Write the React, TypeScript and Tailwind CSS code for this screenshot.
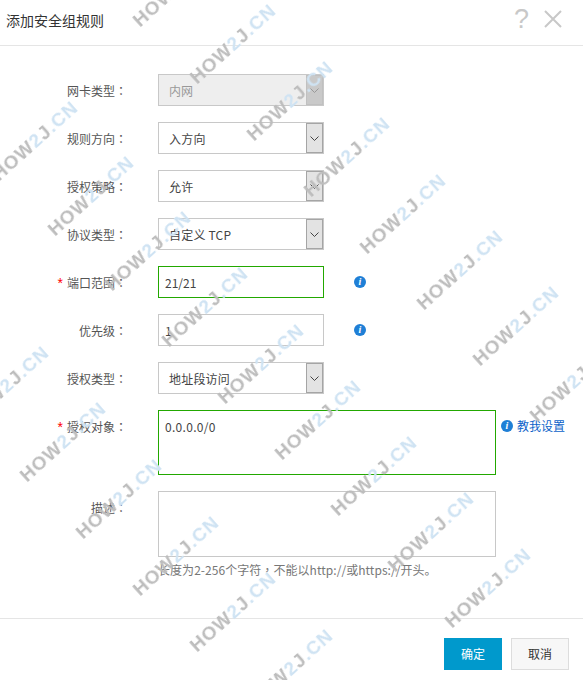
const font = "font-['Microsoft_YaHei','Noto_Sans_CJK_SC','Noto_Sans',sans-serif]";

// start point of each watermark (the bottom-left of the H)
const marks = [
  [133, 23], [190, 80], [247, 137], [304, 193], [360, 250], [417, 306], [473, 362], [530, 418],
  [-8, 177], [48, 232], [105, 287], [162, 343], [218, 400], [275, 456], [331, 512], [388, 568], [445, 624],
  [-37, 422], [20, 478], [76, 535], [133, 592], [190, 648], [247, 705],
];

function Watermark({ x, y }: { x: number; y: number }) {
  return (
    <div
      className="absolute origin-bottom-left -rotate-[42deg] whitespace-nowrap font-['Liberation_Sans',sans-serif] text-[19px] leading-none font-bold tracking-[1px] text-[#bdbdbd] blur-[0.4px]"
      style={{ left: x + 9, top: y - 12 }}
    >
      HOW<span className="text-[#cfe3f3]">2</span>J<span className="text-[#cfe3f3]">.CN</span>
    </div>
  );
}

function Label({ text, required }: { text: string; required?: boolean }) {
  return (
    <div className="flex w-[127px] shrink-0 items-center justify-end whitespace-nowrap pt-[1px] text-[12px] text-[#555]">
      {required && <span className="mr-1 font-['Liberation_Sans'] text-[14px] leading-none text-[#f00]">*</span>}
      <span>
        {text}
        <span className="font-['Noto_Sans_CJK_TC']">：</span>
      </span>
    </div>
  );
}

function Select({ value, disabled }: { value: string; disabled?: boolean }) {
  return (
    <div
      className={
        disabled
          ? "flex h-8 w-[166px] items-center justify-between border border-[#c8c8c8] bg-[#eee] pl-[10px] text-[12px] text-[#999]"
          : "flex h-8 w-[166px] items-center justify-between border border-[#c8c8c8] bg-white pl-[10px] text-[12px] tracking-[0.2px] text-[#444]"
      }
    >
      <span className="pt-[1px]">{value}</span>
      <span
        className={
          disabled
            ? "flex h-[30px] w-[17px] items-center justify-center border border-[#c0c0c0] bg-[#c9c9c9] text-[#999]"
            : "flex h-[30px] w-[17px] items-center justify-center border border-[#a5a5a5] bg-[#e3e3e3] text-[#444]"
        }
      >
        <svg width="9" height="5" viewBox="0 0 9 5" fill="none" stroke="currentColor">
          <path d="M0.5 0.5 L4.5 4.5 L8.5 0.5" />
        </svg>
      </span>
    </div>
  );
}

function Info() {
  return (
    <span className="flex h-3 w-3 shrink-0 items-center justify-center rounded-full bg-[#1f7fd6] font-['Liberation_Serif',serif] text-[10px] leading-none font-bold text-white italic">
      i
    </span>
  );
}

export default function App() {
  return (
    <div className={`relative h-[680px] w-[583px] overflow-hidden bg-white ${font}`}>
      <div className="flex h-[46px] items-center justify-between border-b border-[#e5e5e5] pr-[21px] pl-[6px]">
        <h3 className="pb-[4px] text-[14px] text-[#333]">添加安全组规则</h3>
        <div className="flex items-center gap-[15px] pb-[7px] text-[#c8c8c8]">
          <span className="font-['Liberation_Sans'] text-[27px] leading-none">?</span>
          <svg width="18" height="18" viewBox="0 0 18 18" fill="none" stroke="currentColor" strokeWidth="2">
            <path d="M1 1 L17 17 M17 1 L1 17" />
          </svg>
        </div>
      </div>

      <div className="flex h-[572px] flex-col gap-4 pt-[28px]">
        <div className="flex h-8 gap-[31px]">
          <Label text="网卡类型" />
          <Select value="内网" disabled />
        </div>
        <div className="flex h-8 gap-[31px]">
          <Label text="规则方向" />
          <Select value="入方向" />
        </div>
        <div className="flex h-8 gap-[31px]">
          <Label text="授权策略" />
          <Select value="允许" />
        </div>
        <div className="flex h-8 gap-[31px]">
          <Label text="协议类型" />
          <Select value="自定义 TCP" />
        </div>
        <div className="flex h-8 items-center gap-[31px]">
          <Label text="端口范围" required />
          <div className="flex h-8 w-[166px] items-center border border-[#22a800] pt-[1px] pl-[6px] text-[12px] text-[#444]">21/21</div>
          <div className="-ml-px"><Info /></div>
        </div>
        <div className="flex h-8 items-center gap-[31px]">
          <Label text="优先级" />
          <div className="flex h-8 w-[166px] items-center border border-[#c8c8c8] pt-[1px] pl-[6px] text-[12px] text-[#444]">1</div>
          <div className="-ml-px"><Info /></div>
        </div>
        <div className="flex h-8 gap-[31px]">
          <Label text="授权类型" />
          <Select value="地址段访问" />
        </div>
        <div className="flex h-[65px] gap-[31px]">
          <div className="flex h-8 items-center">
            <Label text="授权对象" required />
          </div>
          <div className="h-[65px] w-[338px] border border-[#22a800] pt-[7px] pl-[6px] text-[12px] tracking-[0.3px] text-[#444]">0.0.0.0/0</div>
          <div className="-ml-[26px] flex h-8 items-center gap-[4px] text-[12px] text-[#0d63c9]">
            <Info />
            <span>教我设置</span>
          </div>
        </div>
        <div className="flex gap-[31px]">
          <div className="flex h-[33px] items-center">
            <Label text="描述" />
          </div>
          <div className="flex flex-col">
            <div className="h-[66px] w-[338px] border border-[#c8c8c8]" />
            <p className="mt-[4px] whitespace-nowrap text-[12px] tracking-[0.05px] text-[#777]">
              长度为2-256个字符<span className="font-['Noto_Sans_CJK_TC']">，</span>不能以http://或https://开头。
            </p>
          </div>
        </div>
      </div>

      <div className="flex h-[62px] items-start justify-end gap-[9px] border-t border-[#e5e5e5] pt-[19px] pr-[14px]">
        <button className="h-8 w-[58px] bg-[#0099cc] text-[12px] text-white">确定</button>
        <button className="h-8 w-[58px] border border-[#ddd] bg-[#f7f7f7] text-[12px] text-[#333]">取消</button>
      </div>

      <div className="pointer-events-none absolute inset-0">
        {marks.map(([x, y]) => (
          <Watermark key={`${x}-${y}`} x={x} y={y} />
        ))}
      </div>
    </div>
  );
}
